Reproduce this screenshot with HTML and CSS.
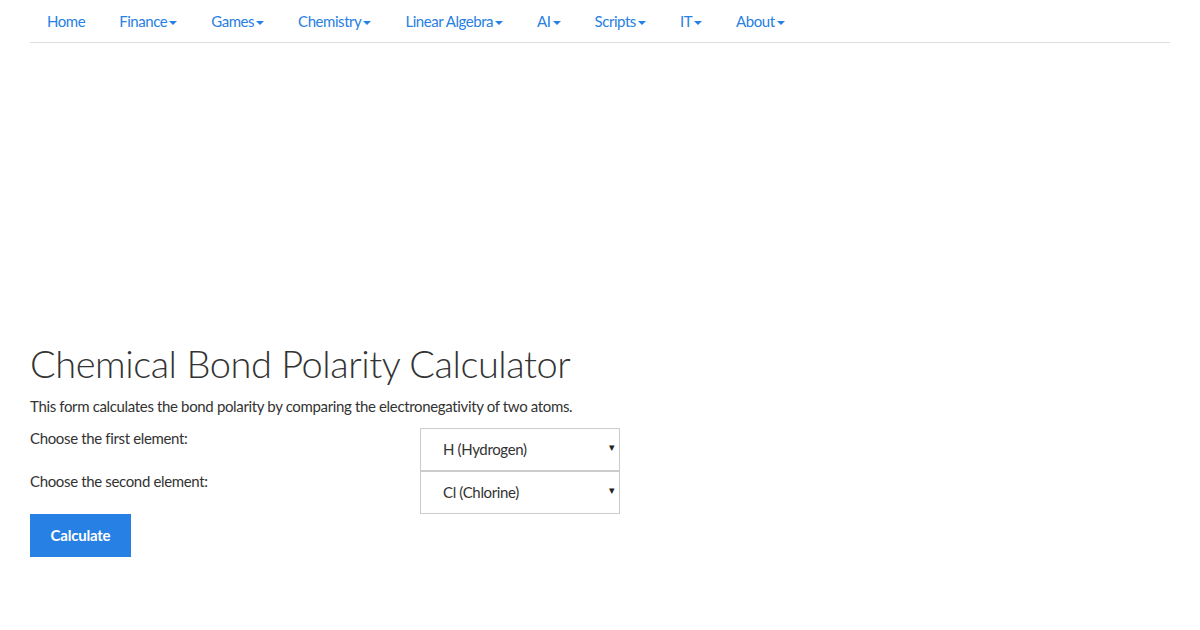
FILE: index.html
```html
<!DOCTYPE html>
<html lang="en">

<head>
    <meta charset="UTF-8">
    <meta name="viewport" content="width=device-width, initial-scale=1.0">
    <title>Chemical Bond Polarity Calculator</title>
    <link rel="stylesheet" href="styles.css">
</head>

<body>
    <div class="container">
        <!-- 导航 -->
        <ul class="nav">
            <li><a href="#">Home</a></li>
            <li><a href="#">Finance<span class="caret"></span></a></li>
            <li><a href="#">Games<span class="caret"></span></a></li>
            <li><a href="#">Chemistry<span class="caret"></span></a></li>
            <li><a href="#">Linear Algebra<span class="caret"></span></a></li>
            <li><a href="#">AI<span class="caret"></span></a></li>
            <li><a href="#">Scripts<span class="caret"></span></a></li>
            <li><a href="#">IT<span class="caret"></span></a></li>
            <li><a href="#">About<span class="caret"></span></a></li>
        </ul>

        <!-- 广告位 (空白) -->
        <div class="ad_box"></div>

        <h1>Chemical Bond Polarity Calculator</h1>
        <p>This form calculates the bond polarity by comparing the electronegativity of two atoms.</p>

        <form class="calc_form">
            <div class="form_row">
                <label for="el1">Choose the first element:</label>
                <div class="select_wrap">
                    <select id="el1" class="form_control">
                        <option>H (Hydrogen)</option>
                        <option>Cl (Chlorine)</option>
                    </select>
                    <span class="arrow">&#9662;</span>
                </div>
            </div>
            <div class="form_row">
                <label for="el2">Choose the second element:</label>
                <div class="select_wrap">
                    <select id="el2" class="form_control">
                        <option>Cl (Chlorine)</option>
                        <option>H (Hydrogen)</option>
                    </select>
                    <span class="arrow">&#9662;</span>
                </div>
            </div>
            <button type="button" class="btn_calc">Calculate</button>
        </form>
    </div>
</body>

</html>
```

FILE: styles.css
```css
/* 初始化 */
* {
    margin: 0;
    padding: 0;
    box-sizing: border-box;
}

body {
    font-family: Lato, "Liberation Sans", sans-serif;
    font-size: 15px;
    line-height: 21.4px;
    letter-spacing: -0.35px;
    color: #333;
    background: #fff;
}

li {
    list-style: none;
}

a {
    color: #2780e3;
    text-decoration: none;
}

.container {
    width: 1170px;
    margin: 0 auto;
    padding: 0 15px;
}

/* 导航 */
.nav {
    display: flex;
    border-bottom: 1px solid #ddd;
}

.nav li a {
    display: block;
    padding: 11px 15px 10px 17px;
    margin-right: 2px;
    letter-spacing: -0.45px;
}

.nav .caret {
    display: inline-block;
    width: 0;
    height: 0;
    margin-left: 2px;
    vertical-align: middle;
    border-top: 4px solid;
    border-left: 4px solid transparent;
    border-right: 4px solid transparent;
}

.ad_box {
    height: 278px;
}

h1 {
    font-size: 38px;
    font-weight: 300;
    line-height: 43px;
    letter-spacing: -0.45px;
    margin: 21px 0 10.5px;
}

p {
    margin-bottom: 10.5px;
}

/* 表单 */
.form_row {
    display: flex;
    align-items: flex-start;
}

.form_row label {
    width: 390px;
}

.select_wrap {
    position: relative;
    width: 200px;
}

.form_control {
    display: block;
    width: 200px;
    height: 43px;
    padding: 10px 22px;
    font-family: inherit;
    font-size: 15px;
    letter-spacing: -0.35px;
    color: #333;
    background: #fff;
    border: 1px solid #ccc;
    border-radius: 0;
    appearance: none;
    -webkit-appearance: none;
    outline: none;
}

/* 下拉箭头 */
.select_wrap .arrow {
    position: absolute;
    right: 5px;
    top: 8px;
    font-size: 11px;
    color: #222;
    pointer-events: none;
}

.btn_calc {
    display: block;
    height: 43px;
    padding: 10px 20.5px;
    font-family: inherit;
    font-size: 15px;
    font-weight: bold;
    letter-spacing: -0.2px;
    color: #fff;
    background: #2780e3;
    border: none;
    cursor: pointer;
}
```
